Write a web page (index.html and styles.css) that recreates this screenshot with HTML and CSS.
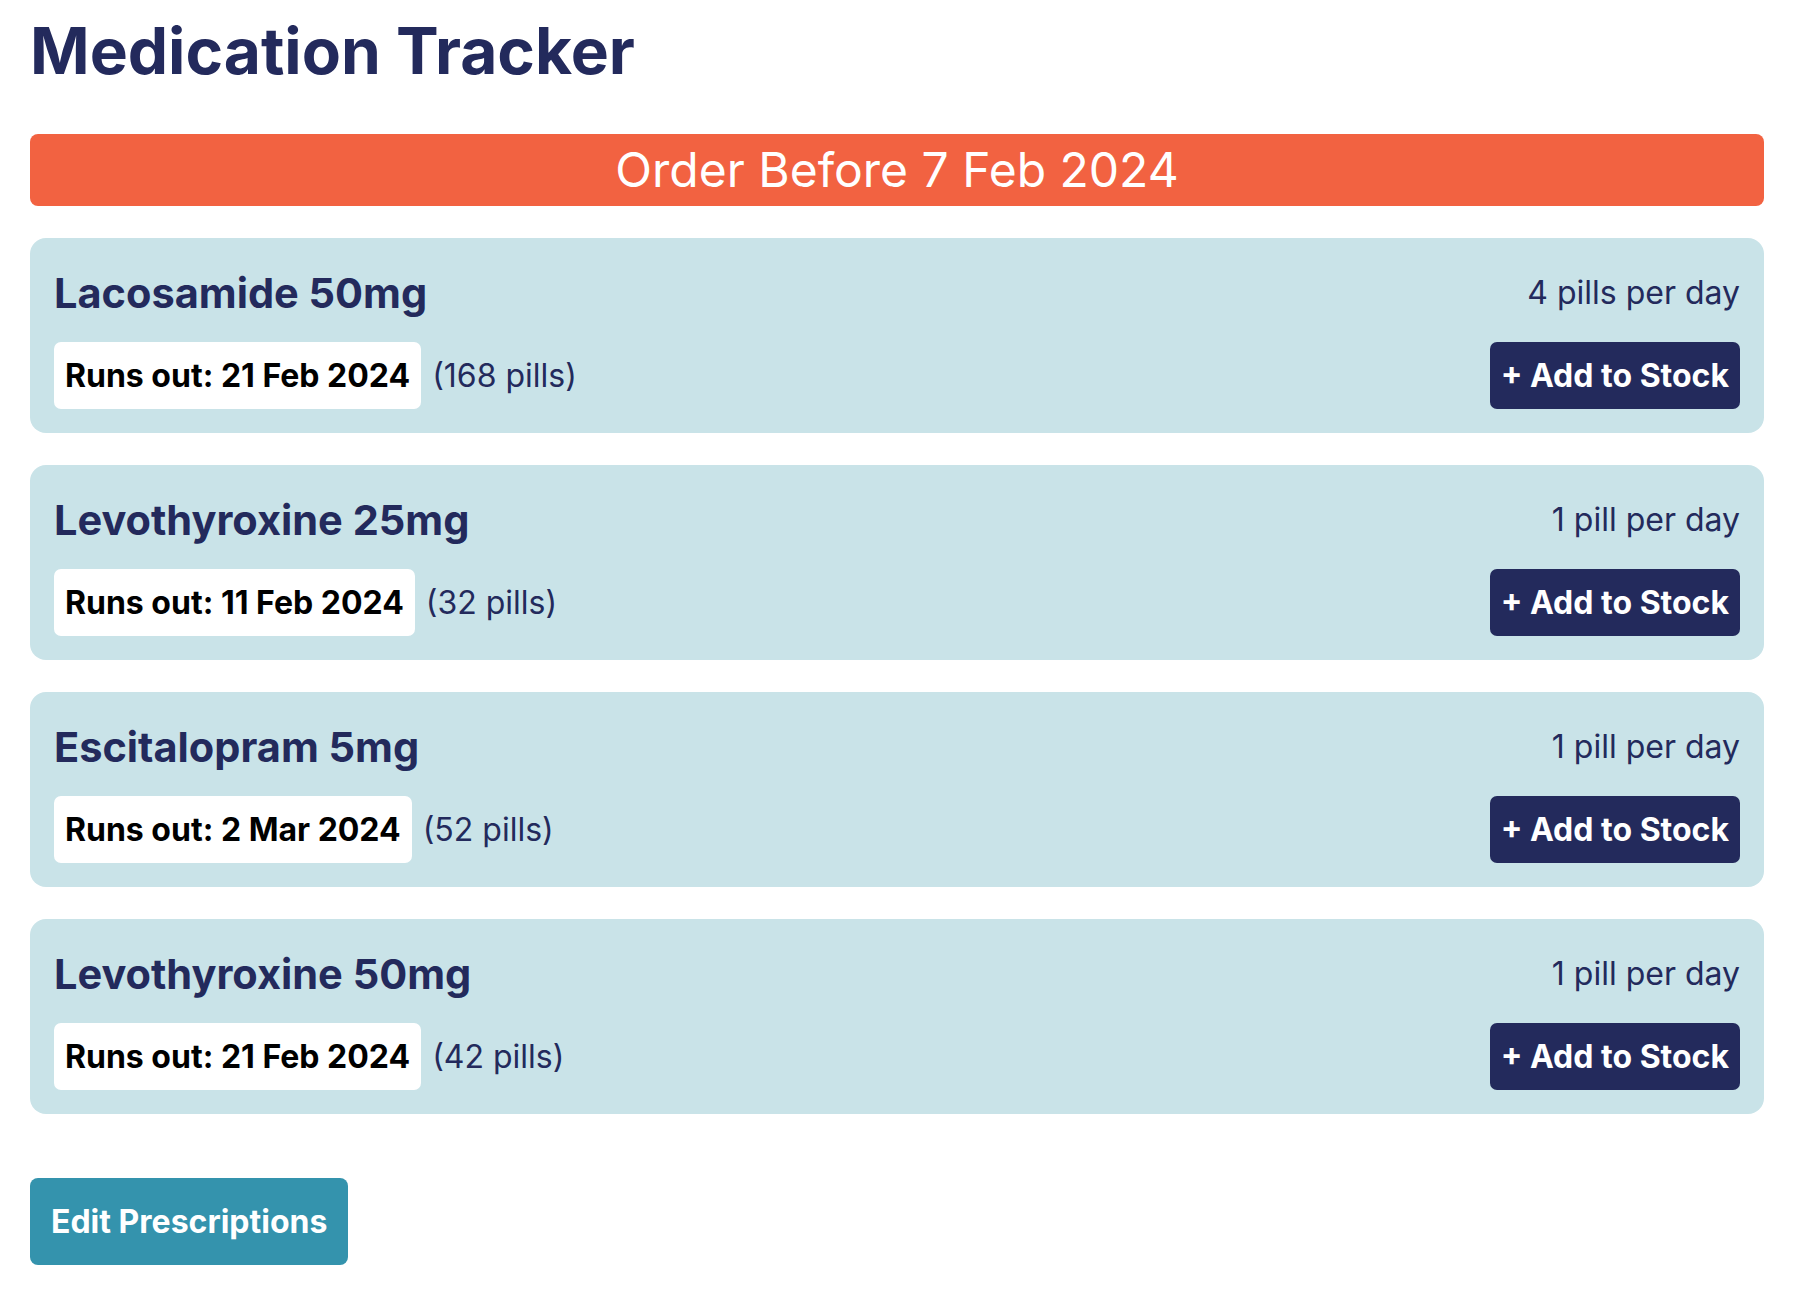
FILE: index.html
```html
<!DOCTYPE html>
<html lang="en">
<head>
<meta charset="utf-8">
<title>Medication Tracker</title>
<link rel="stylesheet" href="styles.css">
</head>
<body>
<main class="page">
  <h1 class="title">Medication Tracker</h1>
  <div class="banner">Order Before 7 Feb 2024</div>
  <section class="list">
    <article class="card">
      <div class="card-top">
        <h2 class="med-name">Lacosamide 50mg</h2>
        <span class="dose">4 pills per day</span>
      </div>
      <div class="card-bottom">
        <div class="stock">
          <span class="runs-out">Runs out: 21 Feb 2024</span>
          <span class="count">(168 pills)</span>
        </div>
        <button class="add-btn">+ Add to Stock</button>
      </div>
    </article>
    <article class="card">
      <div class="card-top">
        <h2 class="med-name">Levothyroxine 25mg</h2>
        <span class="dose">1 pill per day</span>
      </div>
      <div class="card-bottom">
        <div class="stock">
          <span class="runs-out">Runs out: 11 Feb 2024</span>
          <span class="count">(32 pills)</span>
        </div>
        <button class="add-btn">+ Add to Stock</button>
      </div>
    </article>
    <article class="card">
      <div class="card-top">
        <h2 class="med-name">Escitalopram 5mg</h2>
        <span class="dose">1 pill per day</span>
      </div>
      <div class="card-bottom">
        <div class="stock">
          <span class="runs-out">Runs out: 2 Mar 2024</span>
          <span class="count">(52 pills)</span>
        </div>
        <button class="add-btn">+ Add to Stock</button>
      </div>
    </article>
    <article class="card">
      <div class="card-top">
        <h2 class="med-name">Levothyroxine 50mg</h2>
        <span class="dose">1 pill per day</span>
      </div>
      <div class="card-bottom">
        <div class="stock">
          <span class="runs-out">Runs out: 21 Feb 2024</span>
          <span class="count">(42 pills)</span>
        </div>
        <button class="add-btn">+ Add to Stock</button>
      </div>
    </article>
  </section>
  <button class="edit-btn">Edit Prescriptions</button>
</main>
</body>
</html>
```
FILE: styles.css
```css
* { box-sizing: border-box; }
body {
  margin: 0;
  background: #ffffff;
  font-family: Inter, "Noto Sans", sans-serif;
  color: #232a5c;
}
.page {
  padding: 12px 30px 30px;
}
.title {
  margin: 0 0 45px;
  font-size: 64px;
  line-height: 77px;
  font-weight: 700;
  color: #232a5c;
}
.banner {
  height: 72px;
  line-height: 72px;
  background: #f26241;
  color: #ffffff;
  text-align: center;
  font-size: 48px;
  border-radius: 8px;
  margin-bottom: 32px;
}
.list {
  display: flex;
  flex-direction: column;
  gap: 32px;
}
.card {
  background: #c9e3e8;
  border-radius: 16px;
  padding: 24px;
}
.card-top {
  display: flex;
  justify-content: space-between;
  align-items: center;
  margin-bottom: 18px;
}
.med-name {
  margin: 0;
  font-size: 41.5px;
  line-height: 62px;
  font-weight: 700;
  color: #232a5c;
}
.dose {
  font-size: 32px;
  line-height: 40px;
  color: #232a5c;
}
.card-bottom {
  display: flex;
  justify-content: space-between;
  align-items: center;
}
.stock {
  display: flex;
  align-items: center;
  gap: 11px;
}
.runs-out {
  background: #ffffff;
  color: #000000;
  font-weight: 700;
  font-size: 32px;
  line-height: 43px;
  padding: 12px 11px;
  border-radius: 7px;
}
.count {
  font-size: 32px;
  color: #232a5c;
}
.add-btn {
  font-family: inherit;
  border: 0;
  background: #232a5c;
  color: #ffffff;
  font-weight: 700;
  font-size: 32px;
  line-height: 43px;
  padding: 12px 11px;
  border-radius: 7px;
}
.edit-btn {
  margin-top: 64px;
  font-family: inherit;
  border: 0;
  background: #3493ad;
  color: #ffffff;
  font-weight: 700;
  font-size: 32px;
  line-height: 87px;
  padding: 0 21px;
  border-radius: 8px;
}
```
